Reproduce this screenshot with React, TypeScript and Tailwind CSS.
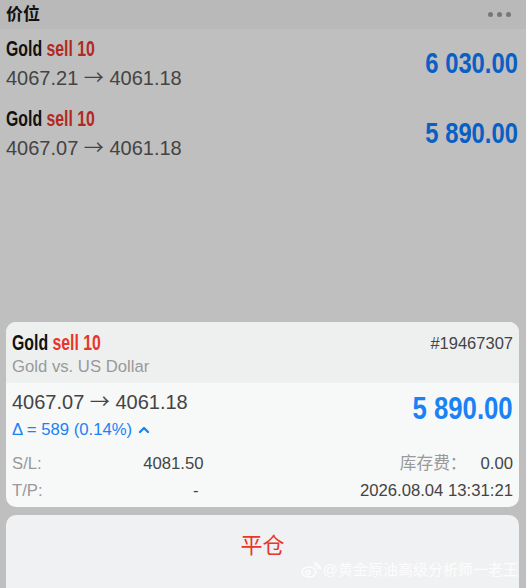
import { ChevronUp } from 'lucide-react'

const ROWS = [
  { open: '4067.21', close: '4061.18', profit: '6 030.00' },
  { open: '4067.07', close: '4061.18', profit: '5 890.00' },
]

const arrow = <span style={{ fontFamily: '"Noto Sans CJK SC", sans-serif' }}>→</span>

function Title({ sell }: { sell: string }) {
  return (
    <div className="h-[26px] whitespace-nowrap">
      <span className="inline-block origin-left scale-x-[0.72] text-[22px] font-bold leading-[26px]">
        <span className="text-[#111]">Gold</span> <span className={sell}>sell 10</span>
      </span>
    </div>
  )
}

export default function App() {
  return (
    <div
      className="relative flex h-[588px] w-[526px] flex-col overflow-hidden bg-[#bfbfbf]"
      style={{ fontFamily: '"Liberation Sans", "Noto Sans CJK SC", sans-serif' }}
    >
      {/* 头部 */}
      <div className="flex h-[29px] shrink-0 items-center justify-between bg-[#b9b9b9] pl-[6px] pr-[15px]">
        <span className="text-[17px] font-bold text-[#111]">价位</span>
        <div className="flex gap-[4px]">
          <span className="h-[5px] w-[5px] rounded-full bg-[#777]" />
          <span className="h-[5px] w-[5px] rounded-full bg-[#777]" />
          <span className="h-[5px] w-[5px] rounded-full bg-[#777]" />
        </div>
      </div>

      {/* 持仓列表 */}
      <div className="flex flex-col">
        {ROWS.map((r, i) => (
          <div key={i} className="flex h-[70px] items-center justify-between pl-[6px] pr-[8px]">
            <div className="flex flex-col">
              <Title sell="text-[#b22a1f]" />
              <div className="text-[20px] leading-[30px] text-[#444]">
                {r.open} {arrow} {r.close}
              </div>
            </div>
            <div className="mt-[-1px] whitespace-nowrap">
              <span className="inline-block origin-right scale-x-[0.82] text-[29px] font-bold text-[#0a5fc4]">
                {r.profit}
              </span>
            </div>
          </div>
        ))}
      </div>

      <div className="flex-1" />

      {/* 详情卡片 */}
      <div className="ml-[6px] mr-[7px] overflow-hidden rounded-[10px] bg-[#f7f8f8]">
        <div className="flex justify-between bg-[#eef0f0] px-[6px] pb-[5px] pt-[8px]">
          <div className="flex flex-col">
            <Title sell="text-[#e8362a]" />
            <div className="text-[16.7px] leading-[22px] text-[#999]">Gold vs. US Dollar</div>
          </div>
          <div className="pt-[1px] text-[16.5px] text-[#444]">#19467307</div>
        </div>
        <div className="flex items-start justify-between px-[6px] pt-[4px]">
          <div className="flex flex-col">
            <div className="text-[20px] leading-[28px] text-[#444]">4067.07 {arrow} 4061.18</div>
            <div className="mt-[3px] flex items-center gap-[4px] text-[16.7px] leading-[22px] text-[#1a82f5]">
              Δ = 589 (0.14%)
              <ChevronUp size={16} strokeWidth={3.5} />
            </div>
          </div>
          <div className="mt-[4px] whitespace-nowrap">
            <span className="inline-block origin-right scale-x-[0.83] text-[31px] font-bold leading-[36px] text-[#1a82f5]">
              5 890.00
            </span>
          </div>
        </div>
        <div className="grid grid-cols-2 gap-x-4 px-[6px] pb-[3px] pt-[9px] text-[16.7px] leading-[27px]">
          <div className="flex justify-between pr-[51px]">
            <span className="text-[#999]">S/L:</span>
            <span className="text-[#444]">4081.50</span>
          </div>
          <div className="flex justify-end">
            <span className="text-[#999]">库存费：</span>
            <span className="ml-[14px] text-[#444]">0.00</span>
          </div>
          <div className="flex justify-between pr-[56px]">
            <span className="text-[#999]">T/P:</span>
            <span className="text-[#444]">-</span>
          </div>
          <div className="flex justify-end">
            <span className="text-[#444]">2026.08.04 13:31:21</span>
          </div>
        </div>
      </div>

      {/* 平仓按钮 */}
      <div className="ml-[6px] mr-[7px] mt-[8px] flex h-[73px] shrink-0 items-start justify-center rounded-t-[10px] bg-[#f0f1f2] pt-[14px]">
        <span className="text-[22px] text-[#e8362a]">平仓</span>
      </div>

      {/* 水印 */}
      <div className="absolute bottom-[7px] right-[8px] flex items-center gap-[2px] text-[15px] text-white/80">
        <svg width="20" height="16" viewBox="0 0 20 16" fill="none" stroke="white" strokeOpacity="0.85" strokeWidth="1.5">
          <ellipse cx="8" cy="10" rx="7" ry="5" />
          <circle cx="7" cy="10.5" r="2" />
          <path d="M13 3a4 4 0 0 1 4 4" />
          <path d="M13 0.8a6.5 6.5 0 0 1 6.3 6.3" />
        </svg>
        <span>@黄金原油高级分析师一老王</span>
      </div>
    </div>
  )
}
